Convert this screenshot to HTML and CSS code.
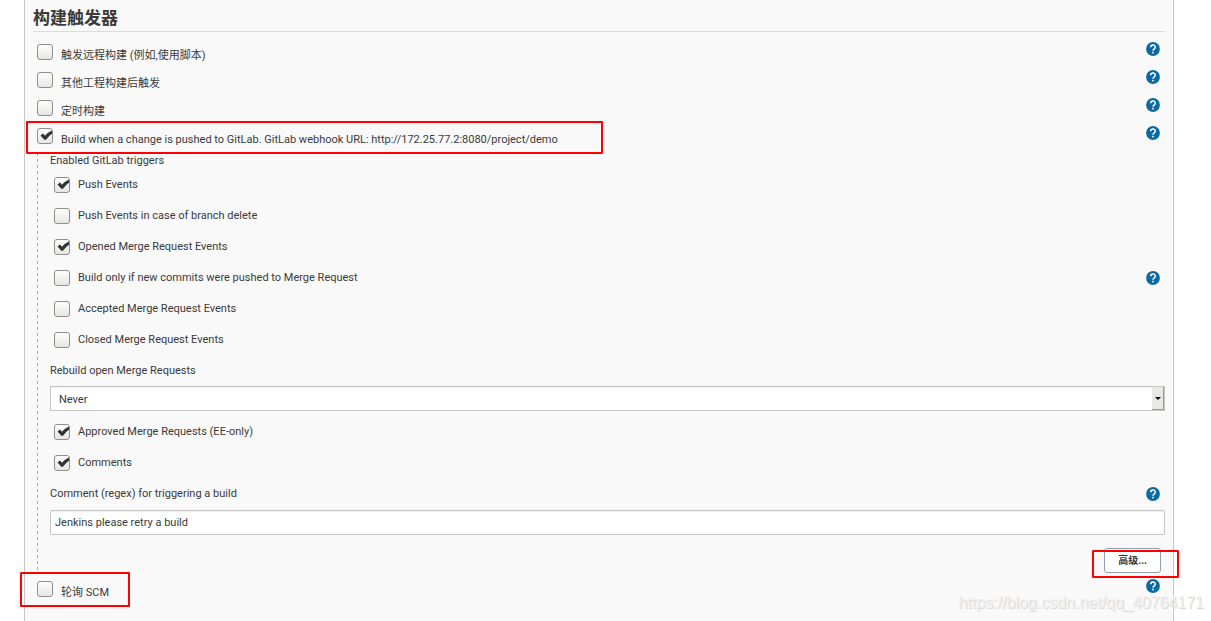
FILE: index.html
```html
<!DOCTYPE html>
<html lang="zh-CN">
<head>
<meta charset="utf-8">
<title>构建触发器</title>
<link rel="stylesheet" href="styles.css">
</head>
<body>
<svg class="defs" aria-hidden="true">
  <symbol id="help-icon" viewBox="0 0 14 14">
    <circle cx="7" cy="7" r="6.9" fill="#0b6aa2"/>
    <path d="M4.7 5.3C4.7 2.3 9.3 2.3 9.3 5.1C9.3 6.8 7 6.8 7 8.7" fill="none" stroke="#fff" stroke-width="1.5"/>
    <rect x="6.2" y="9.8" width="1.6" height="1.6" fill="#fff"/>
  </symbol>
</svg>
<main class="panel">
  <h1 class="title">构建触发器</h1>
  <form class="triggers">
    <div class="trigger"><label class="option"><input class="check" type="checkbox"><span class="text">触发远程构建 (例如,使用脚本)</span></label><button class="help" type="button" aria-label="帮助"><svg><use href="#help-icon"/></svg></button></div>
    <div class="trigger"><label class="option"><input class="check" type="checkbox"><span class="text">其他工程构建后触发</span></label><button class="help" type="button" aria-label="帮助"><svg><use href="#help-icon"/></svg></button></div>
    <div class="trigger"><label class="option"><input class="check" type="checkbox"><span class="text">定时构建</span></label><button class="help" type="button" aria-label="帮助"><svg><use href="#help-icon"/></svg></button></div>
    <div class="trigger"><label class="option"><input class="check" type="checkbox" checked><span class="text">Build when a change is pushed to GitLab. GitLab webhook URL: http://172.25.77.2:8080/project/demo</span></label><button class="help" type="button" aria-label="帮助"><svg><use href="#help-icon"/></svg></button><span class="mark mark-gitlab"></span></div>

    <section class="group">
      <p class="caption">Enabled GitLab triggers</p>
      <div class="row"><label class="event"><input class="check" type="checkbox" checked>Push Events</label></div>
      <div class="row"><label class="event"><input class="check" type="checkbox">Push Events in case of branch delete</label></div>
      <div class="row"><label class="event"><input class="check" type="checkbox" checked>Opened Merge Request Events</label></div>
      <div class="row"><label class="event"><input class="check" type="checkbox">Build only if new commits were pushed to Merge Request</label><button class="help" type="button" aria-label="帮助"><svg><use href="#help-icon"/></svg></button></div>
      <div class="row"><label class="event"><input class="check" type="checkbox">Accepted Merge Request Events</label></div>
      <div class="row"><label class="event"><input class="check" type="checkbox">Closed Merge Request Events</label></div>
      <div class="row"><label for="rebuild">Rebuild open Merge Requests</label></div>
      <div class="picker">
        <select class="select" id="rebuild"><option>Never</option></select>
        <span class="arrow"></span>
      </div>
      <div class="row"><label class="event"><input class="check" type="checkbox" checked>Approved Merge Requests (EE-only)</label></div>
      <div class="row"><label class="event"><input class="check" type="checkbox" checked>Comments</label></div>
      <div class="row"><label for="comment">Comment (regex) for triggering a build</label><button class="help" type="button" aria-label="帮助"><svg><use href="#help-icon"/></svg></button></div>
      <input class="field" id="comment" type="text" value="Jenkins please retry a build">
      <div class="actions">
        <div class="marked"><button class="advanced" type="button">高级...</button><span class="mark mark-advanced"></span></div>
      </div>
    </section>

    <div class="trigger"><label class="option"><input class="check" type="checkbox"><span class="text">轮询 SCM</span></label><button class="help" type="button" aria-label="帮助"><svg><use href="#help-icon"/></svg></button><span class="mark mark-scm"></span></div>
  </form>
</main>
<div class="watermark">https://blog.csdn.net/qq_40764171</div>
</body>
</html>
```

FILE: styles.css
```css
* {
  box-sizing: border-box;
}

body {
  position: relative;
  margin: 0;
  background: #fff;
  color: #3a3a3a;
  font: 11px/16px Roboto, "Noto Sans CJK SC", sans-serif;
}

.defs {
  display: none;
}

.panel {
  min-height: 100vh;
  margin: 0 37px 0 24px;
  padding: 6px 8px 0;
  border: solid #c6c6c6;
  border-width: 0 1px;
  background: #f9f9f9;
}

.title {
  margin: 0 0 9px;
  border-bottom: 1px solid #dcdcdc;
  font-size: 17px;
  line-height: 25px;
}

.trigger {
  position: relative;
  display: flex;
  justify-content: space-between;
  align-items: flex-start;
  height: 28px;
  padding-left: 4px;
}

.option {
  display: flex;
  gap: 8px;
  padding-top: 3px;
}

.text {
  padding-top: 4px;
}

.check {
  appearance: none;
  flex: none;
  width: 16px;
  height: 16px;
  margin: 0;
  border: 1px solid #8f908c;
  border-radius: 3px;
  background: linear-gradient(#fdfdfd, #e6e6e4);
}

.check:checked {
  background:
    url("data:image/svg+xml,%3Csvg xmlns='http://www.w3.org/2000/svg' viewBox='0 0 14 14'%3E%3Cpath d='M2.5 6.5 5 4.5 7 6.7Q9.5 3.5 14 1.5V4.7Q10.5 7 8 10.8H6.3Z' fill='%232e3436'/%3E%3C/svg%3E") center / 14px 14px no-repeat,
    linear-gradient(#fdfdfd, #e6e6e4);
}

.help {
  flex: none;
  width: 14px;
  height: 14px;
  margin: 1px 5px 0 0;
  padding: 0;
  border: 0;
  background: none;
}

.help svg {
  display: block;
  width: 14px;
  height: 14px;
}

.group {
  margin: 0 0 5px 4px;
  padding: 0 0 0 13px;
  background: repeating-linear-gradient(#aaa 0 3px, transparent 3px 6px) left top / 1px 100% no-repeat;
}

.caption {
  margin: 0;
}

.row {
  display: flex;
  justify-content: space-between;
  align-items: center;
  height: 31px;
}

.event {
  display: flex;
  align-items: center;
  gap: 8px;
  padding-left: 4px;
}

.picker {
  position: relative;
  margin-bottom: 5px;
}

.select,
.field {
  display: block;
  width: 100%;
  height: 25px;
  border: 1px solid #c6c6c6;
  background: #fff;
  box-shadow: inset 0 1px 1px #eee;
  color: #3a3a3a;
  font: inherit;
}

.select {
  appearance: none;
  padding: 3px 20px 0 8px;
  border-radius: 0;
}

.arrow {
  position: absolute;
  top: 1px;
  right: 1px;
  bottom: 1px;
  display: grid;
  place-items: center;
  width: 12px;
  border: solid #999;
  border-width: 0 1px 1px 0;
  background: #e8e8e6;
  pointer-events: none;
}

.arrow::after {
  content: "";
  border: solid transparent;
  border-width: 3px 3px 0;
  border-top-color: #000;
}

.field {
  margin-top: 1px;
  padding: 0 4px 1px;
  border-radius: 2px;
}

.actions {
  display: flex;
  justify-content: flex-end;
  padding: 13px 4px 0 0;
}

.marked {
  position: relative;
}

.advanced {
  display: block;
  height: 25px;
  padding: 0 13px;
  border: 1px solid #8fa1ab;
  border-radius: 3px;
  background: #fff;
  color: #3a3a3a;
  font: bold 10px/22px Roboto, "Noto Sans CJK SC", sans-serif;
}

.mark {
  position: absolute;
  border: 2px solid #f00;
  border-radius: 1px;
  pointer-events: none;
}

.mark-gitlab {
  top: -4px;
  left: -7px;
  width: 577px;
  height: 33px;
}

.mark-advanced {
  inset: 2px -18px -5px -12px;
}

.mark-scm {
  top: -6px;
  left: -13px;
  width: 110px;
  height: 35px;
}

.watermark {
  position: absolute;
  right: 7px;
  bottom: 8px;
  color: #f0f0f0;
  font: 16px/20px "Liberation Sans", sans-serif;
  text-shadow: 1px 1px 1px #d4d4d4;
}
```
